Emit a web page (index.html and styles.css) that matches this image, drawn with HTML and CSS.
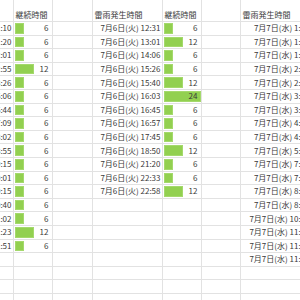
FILE: index.html
```html
<!DOCTYPE html>
<html lang="ja">
<head>
<meta charset="utf-8">
<link rel="stylesheet" href="styles.css">
</head>
<body>
<div class="sheet">
  <div class="c h">雷雨発生時間</div><div class="c h">継続時間</div><div class="c h"></div><div class="c h">雷雨発生時間</div><div class="c h">継続時間</div><div class="c h"></div><div class="c h">雷雨発生時間</div>

  <div class="c d">7月5日(月) 11:10</div><div class="c n"><span class="bar" style="width:9.25px"></span><span class="v">6</span></div><div class="c"></div><div class="c d">7月6日(火) 12:31</div><div class="c n"><span class="bar" style="width:9.25px"></span><span class="v">6</span></div><div class="c"></div><div class="c d">7月7日(水) 1:05</div>
  <div class="c d">7月5日(月) 11:20</div><div class="c n"><span class="bar" style="width:9.25px"></span><span class="v">6</span></div><div class="c"></div><div class="c d">7月6日(火) 13:01</div><div class="c n"><span class="bar" style="width:18.5px"></span><span class="v">12</span></div><div class="c"></div><div class="c d">7月7日(水) 1:32</div>
  <div class="c d">7月5日(月) 12:01</div><div class="c n"><span class="bar" style="width:9.25px"></span><span class="v">6</span></div><div class="c"></div><div class="c d">7月6日(火) 14:06</div><div class="c n"><span class="bar" style="width:9.25px"></span><span class="v">6</span></div><div class="c"></div><div class="c d">7月7日(水) 1:58</div>
  <div class="c d">7月5日(月) 12:55</div><div class="c n"><span class="bar" style="width:18.5px"></span><span class="v">12</span></div><div class="c"></div><div class="c d">7月6日(火) 15:26</div><div class="c n"><span class="bar" style="width:9.25px"></span><span class="v">6</span></div><div class="c"></div><div class="c d">7月7日(水) 2:14</div>
  <div class="c d">7月5日(月) 13:26</div><div class="c n"><span class="bar" style="width:9.25px"></span><span class="v">6</span></div><div class="c"></div><div class="c d">7月6日(火) 15:40</div><div class="c n"><span class="bar" style="width:18.5px"></span><span class="v">12</span></div><div class="c"></div><div class="c d">7月7日(水) 2:47</div>
  <div class="c d">7月5日(月) 16:06</div><div class="c n"><span class="bar" style="width:9.25px"></span><span class="v">6</span></div><div class="c"></div><div class="c d">7月6日(火) 16:03</div><div class="c n"><span class="bar" style="width:37px"></span><span class="v">24</span></div><div class="c"></div><div class="c d">7月7日(水) 3:10</div>
  <div class="c d">7月5日(月) 16:44</div><div class="c n"><span class="bar" style="width:9.25px"></span><span class="v">6</span></div><div class="c"></div><div class="c d">7月6日(火) 16:45</div><div class="c n"><span class="bar" style="width:9.25px"></span><span class="v">6</span></div><div class="c"></div><div class="c d">7月7日(水) 3:36</div>
  <div class="c d">7月5日(月) 17:09</div><div class="c n"><span class="bar" style="width:9.25px"></span><span class="v">6</span></div><div class="c"></div><div class="c d">7月6日(火) 16:57</div><div class="c n"><span class="bar" style="width:9.25px"></span><span class="v">6</span></div><div class="c"></div><div class="c d">7月7日(水) 4:02</div>
  <div class="c d">7月5日(月) 18:02</div><div class="c n"><span class="bar" style="width:9.25px"></span><span class="v">6</span></div><div class="c"></div><div class="c d">7月6日(火) 17:45</div><div class="c n"><span class="bar" style="width:9.25px"></span><span class="v">6</span></div><div class="c"></div><div class="c d">7月7日(水) 4:29</div>
  <div class="c d">7月5日(月) 18:55</div><div class="c n"><span class="bar" style="width:9.25px"></span><span class="v">6</span></div><div class="c"></div><div class="c d">7月6日(火) 18:50</div><div class="c n"><span class="bar" style="width:18.5px"></span><span class="v">12</span></div><div class="c"></div><div class="c d">7月7日(水) 5:15</div>
  <div class="c d">7月5日(月) 19:15</div><div class="c n"><span class="bar" style="width:9.25px"></span><span class="v">6</span></div><div class="c"></div><div class="c d">7月6日(火) 21:20</div><div class="c n"><span class="bar" style="width:9.25px"></span><span class="v">6</span></div><div class="c"></div><div class="c d">7月7日(水) 7:03</div>
  <div class="c d">7月5日(月) 20:01</div><div class="c n"><span class="bar" style="width:9.25px"></span><span class="v">6</span></div><div class="c"></div><div class="c d">7月6日(火) 22:33</div><div class="c n"><span class="bar" style="width:9.25px"></span><span class="v">6</span></div><div class="c"></div><div class="c d">7月7日(水) 7:41</div>
  <div class="c d">7月5日(月) 20:15</div><div class="c n"><span class="bar" style="width:9.25px"></span><span class="v">6</span></div><div class="c"></div><div class="c d">7月6日(火) 22:58</div><div class="c n"><span class="bar" style="width:18.5px"></span><span class="v">12</span></div><div class="c"></div><div class="c d">7月7日(水) 8:12</div>
  <div class="c d">7月5日(月) 20:40</div><div class="c n"><span class="bar" style="width:9.25px"></span><span class="v">6</span></div><div class="c"></div><div class="c d"></div><div class="c n"></div><div class="c"></div><div class="c d">7月7日(水) 8:40</div>
  <div class="c d">7月5日(月) 21:02</div><div class="c n"><span class="bar" style="width:9.25px"></span><span class="v">6</span></div><div class="c"></div><div class="c d"></div><div class="c n"></div><div class="c"></div><div class="c d">7月7日(水) 10:05</div>
  <div class="c d">7月5日(月) 21:23</div><div class="c n"><span class="bar" style="width:18.5px"></span><span class="v">12</span></div><div class="c"></div><div class="c d"></div><div class="c n"></div><div class="c"></div><div class="c d">7月7日(水) 11:02</div>
  <div class="c d">7月5日(月) 21:51</div><div class="c n"><span class="bar" style="width:9.25px"></span><span class="v">6</span></div><div class="c"></div><div class="c d"></div><div class="c n"></div><div class="c"></div><div class="c d">7月7日(水) 11:30</div>
  <div class="c d"></div><div class="c n"></div><div class="c"></div><div class="c d"></div><div class="c n"></div><div class="c"></div><div class="c d">7月7日(水) 11:52</div>
  <div class="c d"></div><div class="c n"></div><div class="c"></div><div class="c d"></div><div class="c n"></div><div class="c"></div><div class="c d"></div>
  <div class="c d"></div><div class="c n"></div><div class="c"></div><div class="c d"></div><div class="c n"></div><div class="c"></div><div class="c d"></div>
  <div class="c d"></div><div class="c n"></div><div class="c"></div><div class="c d"></div><div class="c n"></div><div class="c"></div><div class="c d"></div>
</div>
</body>
</html>
```
FILE: styles.css
```css
html, body {
  margin: 0;
  padding: 0;
  background: #ffffff;
  overflow: hidden;
}

body {
  width: 300px;
  height: 300px;
}

.sheet {
  display: grid;
  grid-template-columns: 71px 39px 40px 70px 39px 39px 71px;
  grid-template-rows: 22px;
  grid-auto-rows: 13.6px;
  margin-left: -57px;
  width: 369px;
  font-family: "Noto Sans CJK JP", "Noto Sans", sans-serif;
  font-size: 8px;
  line-height: 10px;
  color: #3a3a3a;
}

.c {
  box-sizing: border-box;
  border-right: 1px solid #e2e2e2;
  border-bottom: 1px solid #e2e2e2;
  display: flex;
  align-items: center;
  white-space: nowrap;
  overflow: hidden;
  min-width: 0;
}

.h {
  align-items: flex-end;
  padding: 0 0 1px 1.5px;
}

.d {
  justify-content: flex-end;
  padding-right: 1.5px;
}

.n {
  position: relative;
  justify-content: flex-end;
  padding-right: 3.5px;
}

.bar {
  position: absolute;
  left: 1px;
  top: 1px;
  bottom: 1px;
  background: #92d050;
  box-shadow: inset 0 0 0 1px #a4d96c;
}

.v {
  position: relative;
}
```
